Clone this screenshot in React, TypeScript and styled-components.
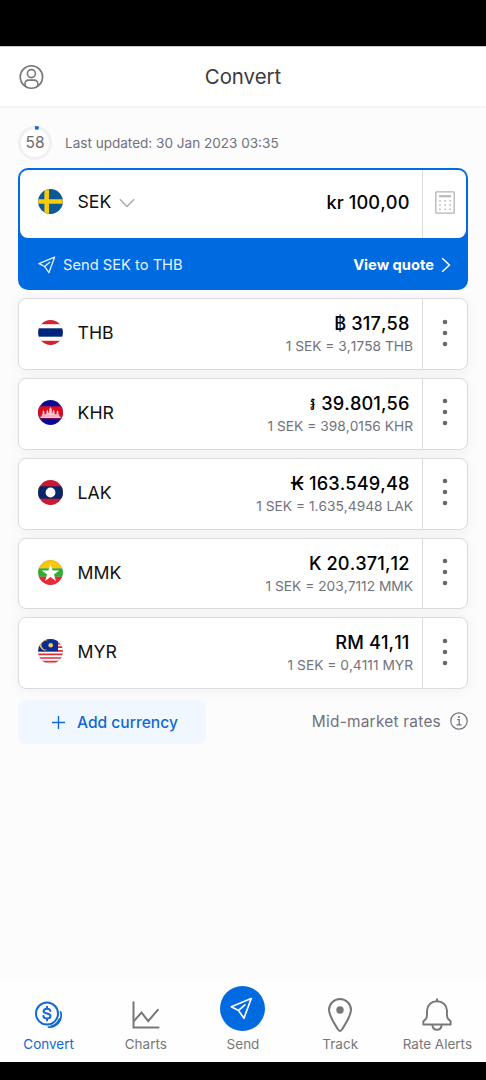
import React from "react";
import styled, { createGlobalStyle } from "styled-components";

const GlobalStyle = createGlobalStyle`
  * { box-sizing: border-box; }
  body { margin: 0; background: #fcfcfc; }
  svg { display: block; flex: none; }
`;

const BLUE = "#006ae0";

const Screen = styled.div`
  width: 486px;
  height: 1080px;
  display: flex;
  flex-direction: column;
  background: #fcfcfc;
  font-family: Inter, "Noto Sans", sans-serif;
  color: #111;
  overflow: hidden;
  white-space: nowrap;
`;

const SystemBar = styled.div<{ $height: number }>`
  flex: none;
  height: ${(p) => p.$height}px;
  background: #000;
`;

const Header = styled.header`
  flex: none;
  height: 62px;
  display: grid;
  grid-template-columns: 60px 1fr 60px;
  align-items: center;
  padding: 1px 0 0 18px;
  background: #fff;
  border-top: 1px solid #c9c9c9;
  border-bottom: 2px solid #f3f3f4;
`;

const Title = styled.h1`
  margin: 0 18px 0 0;
  text-align: center;
  font-size: 20.4px;
  line-height: 26px;
  font-weight: 400;
  color: #3b3b3d;
`;

const Content = styled.main`
  flex: 1;
  min-height: 0;
  padding: 17px 18px 0;
`;

const UpdatedRow = styled.div`
  display: flex;
  align-items: center;
  height: 36px;
  margin-bottom: 7px;
`;

const Timer = styled.div`
  display: grid;
  width: 34px;
  margin-right: 13px;
  place-items: center;
  > * { grid-area: 1 / 1; }
`;

const TimerValue = styled.span`
  padding-bottom: 1px;
  font-size: 15.5px;
  color: #6b6b70;
`;

const UpdatedText = styled.span`
  padding-bottom: 1px;
  font-size: 13.55px;
  color: #70707f;
`;

const BaseCard = styled.section`
  height: 122px;
  padding: 2px;
  border-radius: 10px;
  background: ${BLUE};
  margin-bottom: 8.3px;
`;

const Row = styled.div<{ $active?: boolean }>`
  display: flex;
  align-items: stretch;
  height: ${(p) => (p.$active ? "67.5px" : "71.8px")};
  padding-left: ${(p) => (p.$active ? "18px" : "19px")};
  border-radius: 8px;
  background: #fff;
  border: ${(p) => (p.$active ? "none" : "1px solid #dcdcdf")};
  box-shadow: ${(p) => (p.$active ? "none" : "0 1px 14px rgba(0,0,0,0.055)")};
`;

const RowList = styled.div`
  display: flex;
  flex-direction: column;
  gap: 8px;
`;

const Currency = styled.div<{ $up?: number }>`
  display: flex;
  align-items: center;
  padding-bottom: ${(p) => p.$up ?? 3}px;
`;

const Code = styled.span`
  margin-left: 14.5px;
  font-size: 17.7px;
`;

const Chevron = styled.span`
  margin-left: 7.5px;
  padding-top: 3px;
`;

const Amounts = styled.div<{ $single?: boolean }>`
  flex: 1;
  display: flex;
  flex-direction: column;
  justify-content: center;
  align-items: flex-end;
  padding: ${(p) => (p.$single ? "0 9px 4px 0" : "0 9px 0 0")};
  font-kerning: none;
`;

const Amount = styled.span`
  margin-right: 3.5px;
  font-size: 18.2px;
  line-height: 24px;
  font-weight: 500;
  letter-spacing: 0.1px;
  color: #000;
`;

const Rate = styled.span`
  font-size: 13.75px;
  line-height: 22px;
  color: #73737b;
`;

const Side = styled.div<{ $active?: boolean }>`
  width: ${(p) => (p.$active ? "44px" : "45px")};
  display: flex;
  align-items: center;
  justify-content: center;
  padding-bottom: 3px;
  border-left: 1px solid #dcdcdf;
`;

const QuoteBar = styled.div`
  display: flex;
  align-items: center;
  height: 54px;
  padding: 0 15px 0 18px;
  color: #e6f1ff;
`;

const SendLabel = styled.span`
  flex: 1;
  margin-left: 7px;
  padding-top: 1px;
  font-size: 14.7px;
`;

const QuoteLabel = styled.span`
  margin-right: 7px;
  font-size: 14.7px;
  font-weight: 700;
  color: #fff;
`;

const Actions = styled.div`
  display: flex;
  align-items: flex-start;
  justify-content: space-between;
  margin-top: 10.7px;
`;

const AddButton = styled.button`
  display: flex;
  align-items: center;
  width: 188px;
  height: 44px;
  padding: 1px 0 0 33px;
  gap: 11px;
  border: 0;
  border-radius: 8px;
  background: #f0f7ff;
  color: #1468d3;
  font: 500 15.6px Inter, sans-serif;
`;

const Market = styled.div`
  display: flex;
  align-items: center;
  height: 43px;
  gap: 9px;
  font-size: 15.4px;
  letter-spacing: 0.25px;
  color: #70707f;
`;

const TabBar = styled.nav`
  flex: none;
  height: 81px;
  display: grid;
  grid-template-columns: repeat(5, 1fr);
  background: #fefefe;
`;

const Tab = styled.a<{ $active?: boolean }>`
  display: flex;
  flex-direction: column;
  align-items: center;
  color: ${(p) => (p.$active ? "#1468d3" : "#777")};
`;

const TabIcon = styled.span<{ $drop: number }>`
  display: flex;
  align-items: flex-start;
  justify-content: center;
  height: 54px;
  padding-top: ${(p) => p.$drop}px;
`;

const TabLabel = styled.span`
  font-size: 13.5px;
  line-height: 18px;
`;

const flagArt: Record<string, React.ReactNode> = {
  SEK: (
    <>
      <rect width="25" height="25" fill="#0c5a94" />
      <path d="M8.700 0v25M0 12.500h25" stroke="#fbcb0a" strokeWidth="4.600" />
    </>
  ),
  THB: (
    <>
      <rect width="25" height="25" fill="#fff" />
      <rect width="25" height="4.200" fill="#d9202c" />
      <rect y="8.300" width="25" height="8.400" fill="#00247d" />
      <rect y="20.800" width="25" height="4.200" fill="#d9202c" />
    </>
  ),
  KHR: (
    <>
      <rect width="25" height="25" fill="#0a0a98" />
      <rect y="6.300" width="25" height="12.200" fill="#e00a1c" />
      <path d="M2.500 18v-1.600h1.300v-1.800h.8v-2.800l.9-1.600.9 1.600v2.400h2v-2.800l1-1.800 1 1.800v1.600h.8V9.300l1.300-2.300 1.300 2.300v3.700h.8v-1.600l1-1.800 1 1.800v2.800h2v-2.400l.9-1.600.9 1.600v2.800h.8v1.800h1.300V18z" fill="#f9cdd2" />
      <path d="M4.500 15.900h16" stroke="#e8707c" strokeWidth=".5" />
    </>
  ),
  LAK: (
    <>
      <rect width="25" height="25" fill="#ce1730" />
      <rect y="6.300" width="25" height="12.400" fill="#04266a" />
      <circle cx="12.500" cy="12.500" r="4.900" fill="#fff" />
    </>
  ),
  MMK: (
    <>
      <rect width="25" height="8.500" fill="#fbc509" />
      <rect y="8.300" width="25" height="8.500" fill="#36ab36" />
      <rect y="16.700" width="25" height="8.500" fill="#e92839" />
      <path d="M12.500 4.200l2.150 6.300h6.650l-5.350 4 2 6.400-5.450-3.900-5.450 3.900 2-6.400-5.350-4h6.650z" fill="#fff" />
    </>
  ),
  MYR: (
    <>
      <rect width="25" height="25" fill="#fff" />
      <path d="M0 1h25M0 4.600h25M0 8.200h25M0 11.800h25M0 15.400h25M0 19h25M0 22.600h25" stroke="#dd3038" strokeWidth="1.700" />
      <rect width="20" height="12.300" fill="#0b2a96" />
      <path d="M9.800 2.200a4.500 4.500 0 1 0 0 8.200a5 5 0 1 1 0-8.200z" fill="#f2cf3c" />
      <circle cx="12.700" cy="6.300" r="2.300" fill="#f2cf3c" />
    </>
  ),
};

const Flag = ({ code }: { code: string }) => (
  <svg width="25" height="25" viewBox="0 0 25 25">
    <clipPath id={"flag-" + code}>
      <circle cx="12.500" cy="12.500" r="12.400" />
    </clipPath>
    <g clipPath={`url(#flag-${code})`}>{flagArt[code]}</g>
    <circle cx="12.500" cy="12.500" r="12.200" fill="none" stroke="#5a6070" strokeOpacity=".25" strokeWidth=".5" />
  </svg>
);

const Plane = ({ size, stroke }: { size: number; stroke: number }) => (
  <svg width={size} height={size} viewBox="0 0 18 18" fill="none" stroke="currentColor" strokeWidth={stroke} strokeLinejoin="round" strokeLinecap="round">
    <path d="M16.600 1.200L1 7.600l5.700 2.900 4.200 6.200z" />
    <path d="M6.700 10.500l5-4.300" />
  </svg>
);

const Dots = () => (
  <svg width="6" height="28" viewBox="0 0 6 28" fill="#68686e">
    <circle cx="3" cy="3" r="2.300" />
    <circle cx="3" cy="14" r="2.300" />
    <circle cx="3" cy="25" r="2.300" />
  </svg>
);

const rows = [
  { code: "THB", symbol: "฿", amount: "317,58", rate: "3,1758" },
  { code: "KHR", symbol: "៛", amount: "39.801,56", rate: "398,0156" },
  { code: "LAK", symbol: "₭", amount: "163.549,48", rate: "1.635,4948" },
  { code: "MMK", symbol: "K", amount: "20.371,12", rate: "203,7112" },
  { code: "MYR", symbol: "RM", amount: "41,11", rate: "0,4111" },
];

const SendDisc = styled.span`
  display: flex;
  align-items: center;
  justify-content: center;
  width: 45px;
  height: 45px;
  padding-right: 3px;
  border-radius: 50%;
  background: ${BLUE};
  color: #fff;
`;

const tabs = [
  {
    label: "Convert",
    drop: 20,
    icon: (
      <svg width="30" height="30" viewBox="0 0 30 30" fill="none" stroke="currentColor" strokeWidth="2" strokeLinecap="round">
        <circle cx="13" cy="12.600" r="11" />
        <path d="M16.300 9.900c-.3-1.500-1.500-2.200-3.300-2.200-2 0-3.400.9-3.400 2.500 0 3.400 6.900 1.300 6.900 4.800 0 1.600-1.500 2.500-3.500 2.500s-3.300-.8-3.600-2.400M13 5.800v1.800M13 17.600v1.800" />
        <path d="M26.600 10.800c2.400 8.100-3.600 15.800-12.300 15.200M25.300 18.100c-1.300 3.600-4.500 6.300-8 7" strokeWidth="1.700" />
      </svg>
    ),
  },
  {
    label: "Charts",
    drop: 20,
    icon: (
      <svg width="28" height="28" viewBox="0 0 28 28" fill="none" stroke="currentColor" strokeWidth="2" strokeLinecap="round">
        <path d="M1.500 1.200v25.300h25" />
        <path d="M1.800 20.200l7.700-8.700 6.700 8.700 9.600-11.400" />
      </svg>
    ),
  },
  {
    label: "Send",
    drop: 5,
    icon: (
      <SendDisc>
        <Plane size={23} stroke={1.3} />
      </SendDisc>
    ),
  },
  {
    label: "Track",
    drop: 16,
    icon: (
      <svg width="26" height="36" viewBox="0 0 26 36" fill="none" stroke="currentColor" strokeWidth="2">
        <path d="M13 34c-1 0-1.700-1-2.300-2C6 24.500 2 18.500 2 13a11 11 0 0 1 22 0c0 5.500-4 11.500-8.700 19-.6 1-1.300 2-2.300 2z" />
        <circle cx="13" cy="13" r="3.700" fill="currentColor" stroke="none" />
      </svg>
    ),
  },
  {
    label: "Rate Alerts",
    drop: 17,
    icon: (
      <svg width="32" height="34" viewBox="0 0 32 34" fill="none" stroke="currentColor" strokeWidth="1.900" strokeLinejoin="round">
        <path d="M16 .5v3M2.300 26.500v-3l3-3.200C6.600 17.500 5.900 16 6 12.500c.3-5.500 4.500-9.300 10-9.300S25.700 7 26 12.500c.1 3.500-.6 5 .7 7.800l3 3.200v3zM11.300 27c.4 3 2.200 4.700 4.700 4.700s4.300-1.700 4.700-4.700" />
      </svg>
    ),
  },
];

export default function App() {
  return (
    <Screen>
      <GlobalStyle />
      <SystemBar $height={46} />
      <Header>
        <svg width="26" height="26" viewBox="0 0 26 26" fill="none" stroke="#777" strokeWidth="1.600">
          <circle cx="13.400" cy="13" r="11.200" />
          <circle cx="13.400" cy="9.600" r="4" />
          <path d="M7 22.200v-2.500c0-2 1.600-3.600 3.600-3.600h5.600c2 0 3.600 1.600 3.600 3.600v2.500" />
        </svg>
        <Title>Convert</Title>
      </Header>
      <Content>
        <UpdatedRow>
          <Timer>
            <svg width="34" height="34" viewBox="0 0 34 34" fill="none">
              <circle cx="17" cy="17" r="15.500" fill="#fff" stroke="#f0f0f0" strokeWidth="3" />
              <path d="M17 1.800a15.200 15.200 0 0 1 3.700.4" stroke="#1468d3" strokeWidth="3.400" />
            </svg>
            <TimerValue>58</TimerValue>
          </Timer>
          <UpdatedText>Last updated: 30 Jan 2023 03:35</UpdatedText>
        </UpdatedRow>
        <BaseCard>
          <Row $active>
            <Currency $up={4}>
              <Flag code="SEK" />
              <Code>SEK</Code>
              <Chevron>
                <svg width="16" height="10" viewBox="0 0 16 10" fill="none" stroke="#a9a9b4" strokeWidth="1.400">
                  <path d="M.8 1.200L8 8.600l7.200-7.400" />
                </svg>
              </Chevron>
            </Currency>
            <Amounts $single>
              <Amount>kr 100,00</Amount>
            </Amounts>
            <Side $active>
              <svg width="20" height="23" viewBox="0 0 20 23" fill="none" stroke="#b4b4b9" strokeWidth="1.300">
                <rect x=".8" y=".8" width="18.400" height="21.400" rx=".8" />
                <path d="M4 5.200h12" strokeWidth="2" />
                <path d="M4.200 9.800h12M4.200 14h12M4.200 18.200h12" strokeWidth="1.500" strokeDasharray="1.500 3.600" />
              </svg>
            </Side>
          </Row>
          <QuoteBar>
            <Plane size={18} stroke={1.3} />
            <SendLabel>Send SEK to THB</SendLabel>
            <QuoteLabel>View quote</QuoteLabel>
            <svg width="10" height="16" viewBox="0 0 10 16" fill="none" stroke="#fff" strokeWidth="1.500">
              <path d="M1.200 1.200L8.400 8l-7.200 6.800" />
            </svg>
          </QuoteBar>
        </BaseCard>
        <RowList>
          {rows.map((r) => (
            <Row key={r.code}>
              <Currency>
                <Flag code={r.code} />
                <Code>{r.code}</Code>
              </Currency>
              <Amounts>
                <Amount>
                  {r.symbol} {r.amount}
                </Amount>
                <Rate>
                  1 SEK = {r.rate} {r.code}
                </Rate>
              </Amounts>
              <Side>
                <Dots />
              </Side>
            </Row>
          ))}
        </RowList>
        <Actions>
          <AddButton>
            <svg width="15" height="15" viewBox="0 0 15 15" stroke="currentColor" strokeWidth="1.400">
              <path d="M7.500 1v13M1 7.500h13" />
            </svg>
            Add currency
          </AddButton>
          <Market>
            Mid-market rates
            <svg width="18" height="18" viewBox="0 0 18 18" fill="none" stroke="currentColor" strokeWidth="1.200">
              <circle cx="9" cy="9" r="8.200" />
              <path d="M7.200 7.700h2v5M6.500 12.900h5" />
              <circle cx="9" cy="4.900" r="1" fill="currentColor" stroke="none" />
            </svg>
          </Market>
        </Actions>
      </Content>
      <TabBar>
        {tabs.map((t) => (
          <Tab key={t.label} $active={t.label === "Convert"}>
            <TabIcon $drop={t.drop}>{t.icon}</TabIcon>
            <TabLabel>{t.label}</TabLabel>
          </Tab>
        ))}
      </TabBar>
      <SystemBar $height={18} />
    </Screen>
  );
}
